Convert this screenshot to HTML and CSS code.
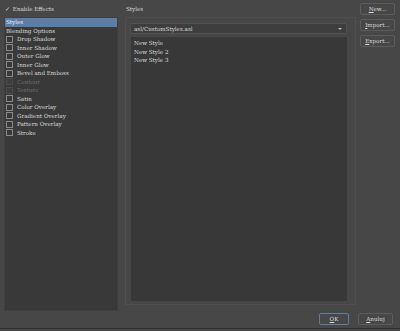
FILE: index.html
```html
<!DOCTYPE html>
<html lang="pl">
<head>
    <meta charset="UTF-8">
    <meta name="viewport" content="width=device-width, initial-scale=1.0">
    <title>Layer Style</title>
    <link rel="stylesheet" href="styles.css">
</head>
<body>
    <div class="dialog">
        <div class="main">
            <!-- Effects list -->
            <div class="left">
                <div class="enable"><span class="tick">&#10003;</span> Enable Effects</div>
                <ul class="effects">
                    <li class="selected">Styles</li>
                    <li>Blending Options</li>
                    <li><span class="box"></span>Drop Shadow</li>
                    <li><span class="box"></span>Inner Shadow</li>
                    <li><span class="box"></span>Outer Glow</li>
                    <li><span class="box"></span>Inner Glow</li>
                    <li><span class="box"></span>Bevel and Emboss</li>
                    <li class="disabled"><span class="box"></span>Contour</li>
                    <li class="disabled"><span class="box"></span>Texture</li>
                    <li><span class="box"></span>Satin</li>
                    <li><span class="box"></span>Color Overlay</li>
                    <li><span class="box"></span>Gradient Overlay</li>
                    <li><span class="box"></span>Pattern Overlay</li>
                    <li><span class="box"></span>Stroke</li>
                </ul>
            </div>

            <!-- Styles group -->
            <div class="center">
                <div class="group-title">Styles</div>
                <div class="group">
                    <div class="select">
                        <span>asl/CustomStyles.asl</span>
                        <span class="arrow"></span>
                    </div>
                    <ul class="styles">
                        <li>New Style</li>
                        <li>New Style 2</li>
                        <li>New Style 3</li>
                    </ul>
                </div>
            </div>

            <!-- Side buttons -->
            <div class="right">
                <button class="btn"><u>N</u>ew...</button>
                <button class="btn"><u>I</u>mport...</button>
                <button class="btn"><u>E</u>xport...</button>
            </div>
        </div>

        <div class="footer">
            <button class="btn default"><u>O</u>K</button>
            <button class="btn"><u>A</u>nuluj</button>
        </div>
    </div>
</body>
</html>
```

FILE: styles.css
```css
html, body { margin: 0; padding: 0; background-color: #474747; }
body { width: 400px; height: 331px; overflow: hidden; font-family: "DejaVu Serif", serif; font-size: 5.6px; color: #dcdcdc; }
ul { list-style: none; margin: 0; padding: 0; }
u { text-decoration: underline; text-underline-offset: 1px; }

.dialog { height: 328px; border-bottom: 1px solid #2f2f2f; display: flex; flex-direction: column; }
.main { display: flex; padding: 3px 0 0 4px; }

/* left column */
.left { width: 114px; display: flex; flex-direction: column; }
.enable { height: 14px; line-height: 11px; padding-left: 1px; }
.tick { font-family: "DejaVu Sans", sans-serif; font-size: 6px; margin-right: 1px; }
.effects { height: 294px; background-color: #393939; box-shadow: inset 0 0 0 1px #3f3f3f; padding-top: 1px; box-sizing: border-box; }
.effects li { height: 8.5px; line-height: 8.5px; padding-left: 2px; display: flex; align-items: center; }
.effects li.selected { background-color: #5b7ea6; color: #eef2f7; margin: 0 1px; padding-left: 1px; }
.effects li.disabled { color: #6e6e6e; }
.box { width: 5px; height: 5px; border: 1px solid #8a8a8a; margin-right: 4px; flex-shrink: 0; }
.disabled .box { border-color: #4a4a4a; background-color: #3d3d3d; }

/* center group */
.center { width: 231px; margin-left: 7px; }
.group-title { height: 14px; line-height: 12px; padding-left: 1px; }
.group { height: 288px; border: 1px solid #4f4f4f; box-sizing: border-box; padding: 5px 8px 0 4px; }
.select { height: 11px; background-color: #3e3e3e; border: 1px solid #525252; border-radius: 2px; box-sizing: border-box; display: flex; align-items: center; justify-content: space-between; padding: 0 4px 0 3px; }
.arrow { width: 0; height: 0; border-left: 2px solid transparent; border-right: 2px solid transparent; border-top: 2px solid #bcbcbc; }
.styles { height: 264px; margin: 3px 0 0 1px; background-color: #383838; padding: 2px 3px; box-sizing: border-box; }
.styles li { height: 8.5px; line-height: 8.5px; }

/* side buttons */
.right { margin-left: 4px; display: flex; flex-direction: column; gap: 4px; }

.btn { width: 35px; height: 12px; padding: 0; background-color: #474747; color: #dcdcdc; border: 1px solid #5c5c5c; border-radius: 2px; font-family: "DejaVu Serif", serif; font-size: 5.6px; line-height: 10px; }
.btn.default { width: 30px; border-color: #6a7c90; box-shadow: inset 0 0 0 1px #3f4a56; }

.footer { margin-top: auto; display: flex; justify-content: flex-end; gap: 9px; padding: 0 7px 3px 0; }
```
